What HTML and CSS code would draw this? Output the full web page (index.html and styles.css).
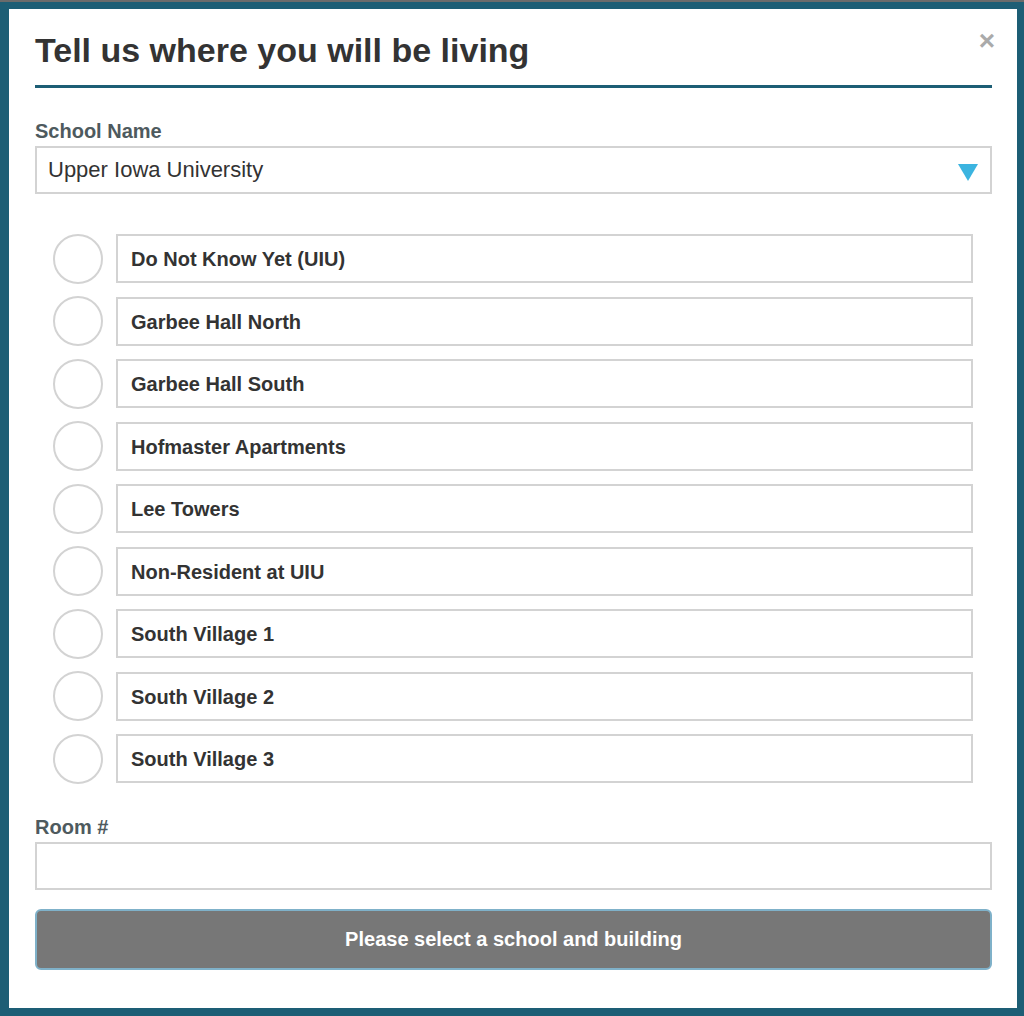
FILE: index.html
```html
<!DOCTYPE html>
<html lang="en">
<head>
    <meta charset="UTF-8" />
    <meta name="viewport" content="width=device-width, initial-scale=1.0">
    <title>Tell us where you will be living</title>
    <link rel="stylesheet" href="styles.css">
</head>
<body>

<div class="modal">
    <!-- Header -->
    <div class="modal-header">
        <h1>Tell us where you will be living</h1>
        <button class="close" type="button">&times;</button>
    </div>

    <!-- School -->
    <label class="field-label">School Name</label>
    <div class="select">
        <span>Upper Iowa University</span>
        <span class="caret"></span>
    </div>

    <!-- Buildings -->
    <ul class="buildings">
        <li><span class="radio"></span><span class="option">Do Not Know Yet (UIU)</span></li>
        <li><span class="radio"></span><span class="option">Garbee Hall North</span></li>
        <li><span class="radio"></span><span class="option">Garbee Hall South</span></li>
        <li><span class="radio"></span><span class="option">Hofmaster Apartments</span></li>
        <li><span class="radio"></span><span class="option">Lee Towers</span></li>
        <li><span class="radio"></span><span class="option">Non-Resident at UIU</span></li>
        <li><span class="radio"></span><span class="option">South Village 1</span></li>
        <li><span class="radio"></span><span class="option">South Village 2</span></li>
        <li><span class="radio"></span><span class="option">South Village 3</span></li>
    </ul>

    <!-- Room -->
    <label class="field-label room-label">Room #</label>
    <input class="text-input" type="text">

    <button class="submit" type="button">Please select a school and building</button>
</div>

</body>
</html>
```

FILE: styles.css
```css
/* Base */
* {
    margin: 0;
    padding: 0;
    box-sizing: border-box;
}

body {
    font-family: 'Liberation Sans', Arial, sans-serif;
    background: #1d5e75;
    border-top: 2px solid #6b6b6b;
    padding: 7px 7px 8px 9px;
    height: 1016px;
}

/* Modal */
.modal {
    background: #fff;
    height: 999px;
    padding: 0 25px 0 26px;
}

.modal-header {
    display: flex;
    justify-content: space-between;
    align-items: flex-start;
    border-bottom: 3px solid #1d5e75;
    padding-top: 21px;
    height: 79px;
}

.modal-header h1 {
    font-size: 34px;
    font-weight: bold;
    color: #333;
    line-height: 40px;
}

.close {
    border: none;
    background: none;
    color: #aaa;
    font-family: 'Liberation Sans', Arial, sans-serif;
    font-size: 28px;
    font-weight: bold;
    line-height: 20px;
    margin-top: 1px;
    margin-right: -3px;
}

/* Fields */
.field-label {
    display: block;
    font-size: 20px;
    font-weight: bold;
    color: #4e5a5e;
    margin-top: 31px;
    margin-bottom: 3px;
    line-height: 24px;
}

.select {
    display: flex;
    justify-content: space-between;
    align-items: center;
    height: 48px;
    border: 2px solid #d3d3d3;
    padding: 0 12px 0 11px;
    font-size: 22px;
    color: #333;
}

.caret {
    width: 0;
    height: 0;
    border-left: 10px solid transparent;
    border-right: 10px solid transparent;
    border-top: 17px solid #3bb4e0;
    margin-top: 4px;
}

/* Building list */
.buildings {
    list-style: none;
    padding: 40px 19px 0 18px;
}

.buildings li {
    display: flex;
    align-items: center;
    gap: 13px;
    height: 49px;
    margin-bottom: 13.5px;
}

.radio {
    flex: none;
    width: 50px;
    height: 50px;
    border: 2px solid #d3d3d3;
    border-radius: 50%;
}

.option {
    flex: 1;
    display: flex;
    align-items: center;
    height: 49px;
    border: 2px solid #d3d3d3;
    padding: 2px 0 0 13px;
    font-size: 20px;
    font-weight: bold;
    color: #333;
}

.room-label {
    margin-top: 32px;
}

.text-input {
    display: block;
    width: 100%;
    height: 48px;
    border: 2px solid #d3d3d3;
    outline: none;
}

.submit {
    display: block;
    width: 100%;
    height: 61px;
    margin-top: 19px;
    background: #777;
    border: 2px solid #7fb1c9;
    border-radius: 6px;
    color: #fff;
    font-family: 'Liberation Sans', Arial, sans-serif;
    font-size: 20px;
    font-weight: bold;
}
```
